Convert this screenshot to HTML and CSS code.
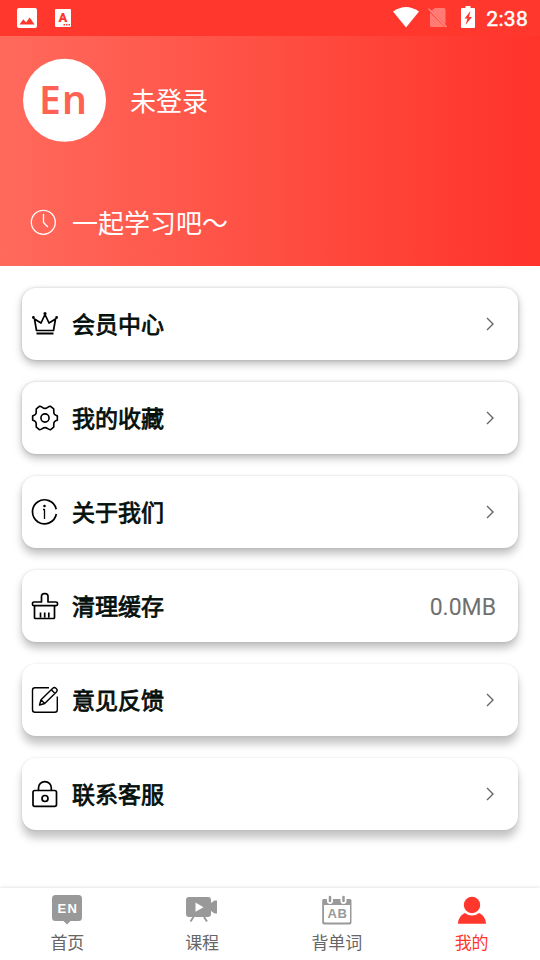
FILE: index.html
```html
<!DOCTYPE html>
<html lang="zh-CN">
	<head>
		<meta charset="UTF-8" />
		<meta name="viewport" content="width=device-width, initial-scale=1.0" />
		<title>我的</title>
		<link rel="stylesheet" href="styles.css">
	</head>
	<body>
		<div class="statusbar">
			<div class="notices">
				<svg width="20" height="20" viewBox="0 0 20 20">
					<path fill="#fff" fill-rule="evenodd" d="M2 0h16a2 2 0 0 1 2 2v16a2 2 0 0 1-2 2H2a2 2 0 0 1-2-2V2a2 2 0 0 1 2-2zM2.500 16.500h15l-4.800-7-3.700 5-2.700-3.200z" />
				</svg>
				<svg width="16" height="18" viewBox="0 0 16 18">
					<rect width="16" height="18" rx="1" fill="#fff" />
					<text class="lang-letter" x="8" y="13" text-anchor="middle">A</text>
					<path fill="#ff372d" d="M8.500 15h1.500v1.500H8.500zM11 15h1.500v1.500H11zM13.500 15H15v1.500h-1.500z" />
				</svg>
			</div>
			<div class="system">
				<svg class="wifi" width="26" height="21" viewBox="0 0 26 21">
					<path fill="#fff" d="M0 4.500Q13-4.500 26 4.500L13 20.500z" />
				</svg>
				<svg class="sim" width="20" height="20" viewBox="0 0 20 20">
					<path fill="#ff7b73" d="M7 0h9a1.500 1.500 0 0 1 1.500 1.500v15L3.500 2.800zM2 4.500L17 19H3.500A1.500 1.500 0 0 1 2 17.500z" />
					<path stroke="#ff8d86" stroke-width="1.500" d="M.5.800l18 18.200" />
				</svg>
				<svg class="battery" width="14" height="22" viewBox="0 0 14 22">
					<path fill="#fff" d="M4.500 0h5v2H13a1 1 0 0 1 1 1v18a1 1 0 0 1-1 1H1a1 1 0 0 1-1-1V3a1 1 0 0 1 1-1h3.500z" />
					<path fill="#ff372d" d="M9.500 5L3.500 12.500h3L4.500 19l6.500-8H8z" />
				</svg>
				<span class="time">2:38</span>
			</div>
		</div>

		<header class="header">
			<div class="user">
				<svg class="avatar" width="84" height="84" viewBox="0 0 84 84">
					<circle cx="42.500" cy="42.300" r="41.500" fill="#fff" />
					<text class="avatar-text" x="17" y="56" textLength="48">En</text>
				</svg>
				<span>未登录</span>
			</div>
			<div class="slogan">
				<svg width="26" height="26" viewBox="0 0 26 26" fill="none" stroke="#fff" stroke-width="1.300">
					<circle cx="13.300" cy="13.300" r="12" />
					<path d="M13.500 5V13.500l4.300 4.500" />
				</svg>
				<span>一起学习吧～</span>
			</div>
		</header>

		<main class="menu">
			<a class="item">
				<svg class="icon" viewBox="0 0 28 28">
					<path d="M5.500 20.500L3.500 9l6.500 4 4-8.500 4 8.500 6.500-4-2 11.500z" />
					<path stroke-width="2" d="M5.500 23.500h17" />
					<path class="dot" d="M1 7.500a1.400 1.400 0 1 0 2.800 0 1.400 1.400 0 1 0-2.800 0zM12.400 3.500a1.600 1.600 0 1 0 3.200 0 1.600 1.600 0 1 0-3.200 0zM24.200 7.500a1.400 1.400 0 1 0 2.800 0 1.400 1.400 0 1 0-2.800 0z" />
				</svg>
				<span class="name">会员中心</span>
				<svg class="arrow" viewBox="0 0 8 14"><path d="M1 1l6 6L1 13" /></svg>
			</a>
			<a class="item">
				<svg class="icon" viewBox="-.5 -.5 29 29">
					<path d="M8.500 1.800C11 2 11.500 4 14 4s3-2 5.500-2.200L23 4.600c.4 2.800-.5 3.900.8 5.600.9 1.100 2.300 1.200 3 1.700v4.200c-.7.600-2.100.7-3 1.800-1.300 1.700-.4 2.800-.8 5.500l-3.500 2.800C17 26 16.500 24 14 24s-3 2-5.500 2.200L5 23.400c-.4-2.700.5-3.800-.8-5.500-.9-1.100-2.300-1.200-3-1.800v-4.200c.7-.5 2.100-.6 3-1.700C5.500 8.500 4.600 7.400 5 4.600z" />
					<circle cx="14" cy="14" r="4.200" />
				</svg>
				<span class="name">我的收藏</span>
				<svg class="arrow" viewBox="0 0 8 14"><path d="M1 1l6 6L1 13" /></svg>
			</a>
			<a class="item">
				<svg class="icon" viewBox="0 0 28 28">
					<path d="M25.200 11.200A12 12 0 1 0 25.300 16" />
					<path stroke-width="1.300" d="M12 11.500h1.500v9.500" />
					<circle class="dot" cx="13.500" cy="8" r="1.300" />
				</svg>
				<span class="name">关于我们</span>
				<svg class="arrow" viewBox="0 0 8 14"><path d="M1 1l6 6L1 13" /></svg>
			</a>
			<a class="item">
				<svg class="icon" viewBox="0 0 28 28">
					<path d="M3.500 14v11.500a1 1 0 0 0 1 1h18a1 1 0 0 0 1-1V14M3 13.700a1.500 1.500 0 0 1-1.500-1.500v-.7A1.500 1.500 0 0 1 3 10h7.500V4.300a2.600 2.600 0 0 1 2.600-2.600h1.300A2.600 2.600 0 0 1 17 4.300V10h8a1.500 1.500 0 0 1 1.500 1.500v.7a1.500 1.500 0 0 1-1.500 1.500zM9.500 20.500v5M13.700 20.500v5M17.800 20.500v5" />
				</svg>
				<span class="name">清理缓存</span>
				<span class="size">0.0MB</span>
			</a>
			<a class="item">
				<svg class="icon thin" viewBox="0 0 28 28">
					<path d="M18 1.700H4a2.500 2.500 0 0 0-2.500 2.500v19.600A2.500 2.500 0 0 0 4 26.300h19.800a2.500 2.500 0 0 0 2.500-2.500V10.500" />
					<path d="M8.500 19l1.500-5.200L21.800 2.300a2.200 2.200 0 0 1 3.100 0l.5.500a2.200 2.200 0 0 1 0 3.100L13.700 17.500zM10 13.800l3.700 3.700M20.300 3.800L24 7.400" />
				</svg>
				<span class="name">意见反馈</span>
				<svg class="arrow" viewBox="0 0 8 14"><path d="M1 1l6 6L1 13" /></svg>
			</a>
			<a class="item">
				<svg class="icon" viewBox="0 0 28 28">
					<rect x="2" y="10.500" width="23.500" height="15.800" rx="1.800" />
					<path d="M7.500 10.500V8a6.400 6.400 0 0 1 12.800 0v2.500" />
					<circle cx="14" cy="18.500" r="3" />
				</svg>
				<span class="name">联系客服</span>
				<svg class="arrow" viewBox="0 0 8 14"><path d="M1 1l6 6L1 13" /></svg>
			</a>
		</main>

		<nav class="tabbar">
			<a class="tab">
				<svg width="34" height="32" viewBox="0 0 34 32">
					<path fill="#999" d="M5.500 1h23a3.500 3.500 0 0 1 3.500 3.500v19a3.500 3.500 0 0 1-3.500 3.500h-8L17 30.500 13.500 27h-8A3.500 3.500 0 0 1 2 23.500v-19A3.500 3.500 0 0 1 5.500 1z" />
					<text class="en" x="7.500" y="18.800" textLength="19.500">EN</text>
				</svg>
				<span>首页</span>
			</a>
			<a class="tab">
				<svg width="34" height="32" viewBox="0 0 34 32">
					<path fill="#999" fill-rule="evenodd" d="M4 3h19a3 3 0 0 1 3 3v3l3.500-2.500H32v13h-2.500L26 17v3a3 3 0 0 1-3 3H4a3 3 0 0 1-3-3V6a3 3 0 0 1 3-3zM10.500 8.500v9.300l8-4.600z" />
					<path stroke="#999" stroke-width="2" d="M8.500 23l-3 4.500M19 23l3 4.500" />
				</svg>
				<span>课程</span>
			</a>
			<a class="tab">
				<svg width="34" height="32" viewBox="0 0 34 32">
					<path fill="#999" fill-rule="evenodd" d="M3.500 5H7v2a3 3 0 0 0 6 0V5h7.500v2a3 3 0 0 0 6 0V5H30a1.500 1.500 0 0 1 1.500 1.500v22A2 2 0 0 1 29.500 30.500h-25A2 2 0 0 1 2.200 28.500V6.500A1.500 1.500 0 0 1 3.500 5zM4 11v16.500a1 1 0 0 0 1 1h24a1 1 0 0 0 1-1V11z" />
					<path stroke="#999" stroke-width="2.500" stroke-linecap="round" d="M10 3v4M23.500 3v4" />
					<text class="ab" x="7.500" y="23.500" textLength="19.500">AB</text>
				</svg>
				<span>背单词</span>
			</a>
			<a class="tab active">
				<svg width="34" height="32" viewBox="0 0 34 32">
					<circle cx="17" cy="11" r="8.200" fill="#ff372d" />
					<path fill="#ff372d" d="M3 29.700c0-4.800 3-9 7-10.700a11 11 0 0 0 14 0c4 1.700 7 5.900 7 10.700z" />
				</svg>
				<span>我的</span>
			</a>
		</nav>
	</body>
</html>
```

FILE: styles.css
```css
* {
	margin: 0;
	padding: 0;
	box-sizing: border-box;
}
body {
	height: 960px;
	display: flex;
	flex-direction: column;
	background-color: #fff;
	font-family: Roboto, "Noto Sans CJK SC", sans-serif;
	overflow: hidden;
}
svg {
	display: block;
	flex-shrink: 0;
}

.statusbar {
	height: 36px;
	padding: 0 12px 0 17px;
	display: flex;
	justify-content: space-between;
	align-items: center;
	background-color: #ff372d;
	color: #fff;

	.notices {
		display: flex;
		align-items: center;
		gap: 18px;
	}
	.lang-letter {
		font-size: 13px;
		font-weight: 900;
		fill: #ff372d;
	}
	.system {
		display: flex;
		align-items: center;
	}
	.wifi {
		margin-right: 9px;
		margin-bottom: 2px;
	}
	.sim {
		margin-right: 13px;
	}
	.battery {
		margin-right: 11px;
		margin-bottom: 2px;
	}
	.time {
		padding-top: 2px;
		font-size: 21px;
		font-weight: 400;
		line-height: 34px;
		letter-spacing: 0.3px;
		-webkit-text-stroke: 0.5px #fff;
	}
}

.header {
	height: 230px;
	padding: 22px 22px 0;
	background: linear-gradient(90deg, #ff6a5c, #ff332a);
	color: #fff;
	font-size: 26px;
	line-height: 38px;

	.user {
		display: flex;
		align-items: center;
		gap: 24px;
	}
	.avatar-text {
		font-family: "Noto Sans", sans-serif;
		font-size: 39px;
		font-weight: 600;
		fill: #ff6254;
	}
	.slogan {
		display: flex;
		align-items: center;
		gap: 16px;
		padding-left: 8px;
		margin-top: 59px;
	}
	span {
		padding-top: 4px;
	}
}

.menu {
	flex: 1;
	display: flex;
	flex-direction: column;
	gap: 22px;
	padding: 22px;

	.item {
		height: 72px;
		padding: 0 22px 0 9px;
		display: flex;
		align-items: center;
		border-radius: 14px;
		background-color: #fff;
		box-shadow: 0 0 3px rgba(0, 0, 0, 0.16), 0 4px 8px rgba(0, 0, 0, 0.27);
	}
	/* shadows get deeper towards the bottom of the screen */
	.item:nth-child(n + 3) {
		box-shadow: 0 0 3px rgba(0, 0, 0, 0.12), 0 6px 8px rgba(0, 0, 0, 0.25);
	}
	.item:nth-child(n + 5) {
		box-shadow: 0 0 3px rgba(0, 0, 0, 0.1), 0 8px 8px rgba(0, 0, 0, 0.23);
	}
	.icon {
		width: 28px;
		height: 28px;
		margin-right: 13px;
		fill: none;
		stroke: #000;
		stroke-width: 1.7;
		stroke-linejoin: round;
	}
	.thin {
		stroke-width: 1.4;
	}
	.dot {
		fill: #000;
		stroke: none;
	}
	.name {
		flex: 1;
		padding-top: 4px;
		font-size: 23px;
		line-height: 34px;
		color: #050f0b;
		-webkit-text-stroke: 0.8px #050f0b;
	}
	.arrow {
		width: 8px;
		height: 14px;
		margin-right: 2px;
		fill: none;
		stroke: #666;
		stroke-width: 1.4;
	}
	.size {
		padding-top: 2px;
		font-size: 23px;
		color: #707070;
	}
}

.tabbar {
	height: 72px;
	padding-right: 1px;
	display: flex;
	background-color: #fff;
	box-shadow: 0 -1px 3px rgba(0, 0, 0, 0.1);

	.tab {
		flex: 1;
		display: flex;
		flex-direction: column;
		align-items: center;
		padding-top: 6px;
		font-size: 17px;
		line-height: 24px;
		color: #666;
	}
	.tab span {
		margin-top: 5px;
	}
	.active {
		color: #ff372d;
	}
	.en,
	.ab {
		font-family: "Liberation Sans", sans-serif;
		font-size: 13px;
		font-weight: 700;
		fill: #fff;
	}
	.ab {
		fill: #999;
	}
}
```
